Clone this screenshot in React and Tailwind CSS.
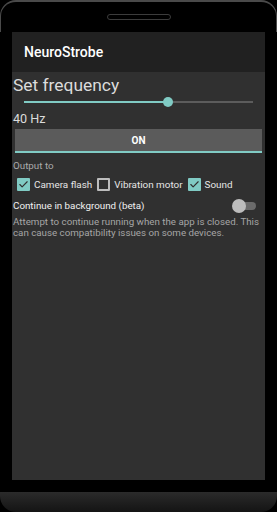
import { Check } from 'lucide-react'

function Box({ checked }) {
  if (checked) {
    return (
      <span className="w-[13px] h-[13px] rounded-[1px] bg-[#80cbc4] flex items-center justify-center">
        <Check size={11} strokeWidth={2.5} color="#303030" />
      </span>
    )
  }
  return <span className="w-[13px] h-[13px] rounded-[1px] border-2 border-[#bdbdbd]" />
}

function Option({ checked, label }) {
  return (
    <div className="flex items-center gap-[4px]">
      <Box checked={checked} />
      <span>{label}</span>
    </div>
  )
}

export default function App() {
  return (
    <div
      className="w-[277px] h-[512px] bg-black flex flex-col overflow-hidden"
      style={{ fontFamily: 'Roboto, "Noto Sans", sans-serif' }}
    >
      <div className="h-[32px] shrink-0 rounded-t-[16px] border-t-2 border-x border-[#4a4a4a] flex items-center justify-center">
        <div className="w-[64px] h-[6px] rounded-full border border-[#3c3c3c]" />
      </div>

      <div className="ml-[12px] w-[253px] h-[448px] shrink-0 bg-[#303030] flex flex-col">
        <div className="h-[40px] bg-[#212121] px-[12px] flex items-center">
          <span className="text-[14px] font-medium text-white">NeuroStrobe</span>
        </div>

        <div className="flex flex-col px-[1px]">
          <div className="text-[17.4px] leading-[22px] text-[#dcdcdc] mt-[2px]">Set frequency</div>

          <div className="relative h-[12px] mx-[11px] flex items-center">
            <div className="h-[2px] w-full bg-[#5c5c5c]" />
            <div className="absolute left-0 h-[2px] w-[144px] bg-[#80cbc4]" />
            <div className="absolute left-[139px] w-[10px] h-[10px] rounded-full bg-[#80cbc4]" />
          </div>

          <div className="text-[12.6px] leading-[18px] text-[#dcdcdc] mt-[2px]">40 Hz</div>

          <div className="mx-[2px] mt-[1px] h-[24px] bg-[#5b5b5b] border-b-2 border-[#80cbc4] flex items-center justify-center">
            <span className="text-[10px] font-bold text-white">ON</span>
          </div>

          <div className="text-[9.8px] leading-[12px] text-[#aaaaaa] mt-[7px]">Output to</div>

          <div className="flex items-center gap-[5px] ml-[4px] mt-[3px] h-[20px] text-[9.9px] text-[#e6e6e6]">
            <Option checked label="Camera flash" />
            <Option label="Vibration motor" />
            <Option checked label="Sound" />
          </div>

          <div className="flex items-center justify-between h-[20px] mt-[1px]">
            <span className="text-[9.8px] text-[#f0f0f0]">Continue in background (beta)</span>
            <div className="relative w-[24px] h-[14px] mr-[8px] flex items-center">
              <div className="ml-[5px] w-[19px] h-[8px] rounded-full bg-[#6b6b6b]" />
              <div className="absolute left-0 w-[14px] h-[14px] rounded-full bg-[#bdbdbd]" />
            </div>
          </div>

          <div className="text-[9.75px] leading-[10.5px] text-[#a6a6a6] mt-[1px]">
            Attempt to continue running when the app is closed. This can cause compatibility issues on some devices.
          </div>
        </div>
      </div>

      <div className="h-[12px] shrink-0" />
      <div className="h-[20px] shrink-0 rounded-b-[16px] bg-gradient-to-b from-[#2b2b2b] to-[#141414]" />
    </div>
  )
}
